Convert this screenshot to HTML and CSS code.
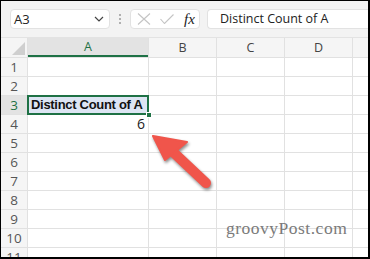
FILE: index.html
```html
<!DOCTYPE html>
<html lang="en">
<head>
  <meta charset="UTF-8">
  <meta name="viewport" content="width=device-width, initial-scale=1.0">
  <title>Distinct Count</title>
  <link rel="stylesheet" href="styles.css">
</head>
<body>
  <div class="frame">
    <div class="toolbar">
      <div class="namebox">
        <span>A3</span>
        <svg class="chevron" width="10" height="6" viewBox="0 0 10 6"><path d="M1 1l4 4 4-4" fill="none" stroke="#444" stroke-width="1.2"/></svg>
      </div>
      <div class="dots"><i></i><i></i><i></i></div>
      <div class="fxbox">
        <svg width="14" height="12" viewBox="0 0 14 12"><path d="M1 0.5l12 11M13 0.5l-12 11" stroke="#c4c4c4" stroke-width="1.1"/></svg>
        <svg width="14" height="10" viewBox="0 0 14 10"><path d="M0.5 5l4 4.5 9-9" fill="none" stroke="#c4c4c4" stroke-width="1.1"/></svg>
        <span class="fx">fx</span>
      </div>
      <div class="formula">Distinct Count of A</div>
    </div>

    <div class="sheet">
      <div class="corner"><span class="tri"></span></div>
      <div class="colhead active">A</div>
      <div class="colhead">B</div>
      <div class="colhead">C</div>
      <div class="colhead">D</div>
      <div class="colhead"></div>

      <div class="rowhead">1</div><div class="cell"></div><div class="cell"></div><div class="cell"></div><div class="cell"></div><div class="cell"></div>
      <div class="rowhead">2</div><div class="cell"></div><div class="cell"></div><div class="cell"></div><div class="cell"></div><div class="cell"></div>
      <div class="rowhead active">3</div><div class="cell selected">Distinct Count of A<span class="handle"></span></div><div class="cell"></div><div class="cell"></div><div class="cell"></div><div class="cell"></div>
      <div class="rowhead">4</div><div class="cell num">6</div><div class="cell"></div><div class="cell"></div><div class="cell"></div><div class="cell"></div>
      <div class="rowhead">5</div><div class="cell"></div><div class="cell"></div><div class="cell"></div><div class="cell"></div><div class="cell"></div>
      <div class="rowhead">6</div><div class="cell"></div><div class="cell"></div><div class="cell"></div><div class="cell"></div><div class="cell"></div>
      <div class="rowhead">7</div><div class="cell"></div><div class="cell"></div><div class="cell"></div><div class="cell"></div><div class="cell"></div>
      <div class="rowhead">8</div><div class="cell"></div><div class="cell"></div><div class="cell"></div><div class="cell"></div><div class="cell"></div>
      <div class="rowhead">9</div><div class="cell"></div><div class="cell"></div><div class="cell"></div><div class="cell"></div><div class="cell"></div>
      <div class="rowhead">10</div><div class="cell"></div><div class="cell"></div><div class="cell"></div><div class="cell"></div><div class="cell"></div>
      <div class="rowhead">11</div><div class="cell"></div><div class="cell"></div><div class="cell"></div><div class="cell"></div><div class="cell"></div>
    </div>

    <!-- annotation drawn over the sheet -->
    <svg class="arrow" width="370" height="259" viewBox="0 0 370 259">
      <g fill="#f0554b" stroke="#f0554b" stroke-linejoin="round">
        <path d="M206 183L172 151" stroke-width="10" stroke-linecap="round" fill="none"/>
        <path d="M153 136L187 142L165 160Z" stroke-width="2"/>
      </g>
    </svg>
    <div class="watermark">groovyPost.com</div>
  </div>
</body>
</html>
```

FILE: styles.css
```css
/* styles.css */
body {
  margin: 0;
  font-family: "Open Sans", "Noto Sans", sans-serif;
}

.frame {
  position: relative;
  width: 370px;
  height: 259px;
  box-sizing: border-box;
  border: 1px solid #000;
  border-right-width: 2px;
  border-bottom-width: 2px;
  background: #f3f3f3;
  overflow: hidden;
}

.toolbar {
  display: flex;
  align-items: center;
  height: 36px;
  padding-left: 9px;
  border-bottom: 1px solid #e3e3e3;
  box-sizing: border-box;
  height: 37px;
}

.namebox {
  display: flex;
  align-items: center;
  justify-content: space-between;
  width: 100px;
  height: 20px;
  box-sizing: border-box;
  padding: 0 5px 0 3px;
  background: #fff;
  border: 1px solid #e2e2e2;
  border-radius: 4px;
  font-size: 13px;
  color: #222;
}

.dots {
  display: flex;
  flex-direction: column;
  gap: 2px;
  margin: 0 9px 0 9px;
}

.dots i {
  width: 2px;
  height: 2px;
  background: #9a9a9a;
  border-radius: 1px;
}

.fxbox {
  display: flex;
  align-items: center;
  gap: 9px;
  width: 70px;
  height: 20px;
  box-sizing: border-box;
  padding-left: 6px;
  background: #fff;
  border: 1px solid #e2e2e2;
  border-radius: 4px;
}

.fx {
  font-family: "Liberation Serif", serif;
  font-style: italic;
  font-size: 15px;
  color: #222;
  margin-left: 1px;
}

.formula {
  flex: 1;
  height: 20px;
  box-sizing: border-box;
  margin-left: 7px;
  padding-left: 12px;
  background: #fff;
  border: 1px solid #e2e2e2;
  border-right: none;
  border-radius: 4px 0 0 4px;
  font-size: 12.5px;
  line-height: 18px;
  color: #222;
}

.sheet {
  display: grid;
  grid-template-columns: 26px 120px 67px 67px 67px 1fr;
  grid-template-rows: 19px;
  grid-auto-rows: 18px;
  gap: 1px;
  background: #e1e1e1;
  font-size: 13px;
}

.corner {
  position: relative;
  background: #f5f5f5;
}

.tri {
  position: absolute;
  right: 2px;
  bottom: 2px;
  width: 0;
  height: 0;
  border-left: 13px solid transparent;
  border-bottom: 13px solid #cfcfcf;
}

.colhead {
  background: #f5f5f5;
  color: #444;
  text-align: center;
  line-height: 19px;
  font-size: 12.5px;
}

.colhead.active {
  background: #e3e3e3;
  color: #1e7145;
  border-bottom: 2px solid #1e7145;
  line-height: 18px;
}

.rowhead {
  background: #f5f5f5;
  color: #555;
  text-align: center;
  line-height: 18px;
  font-size: 13.5px;
}

.rowhead.active {
  background: #e3e3e3;
  color: #1e7145;
}

.cell {
  background: #fff;
  line-height: 18px;
}

.cell.num {
  text-align: right;
  padding-right: 3px;
  font-size: 14px;
  color: #222;
}

.cell.selected {
  position: relative;
  background: #dde5f3;
  outline: 2px solid #1e7145;
  outline-offset: -1px;
  font-family: "Liberation Sans", Arial, sans-serif;
  font-weight: bold;
  font-size: 13px;
  letter-spacing: -0.3px;
  padding-left: 3px;
  color: #111;
}

.handle {
  position: absolute;
  right: -4px;
  bottom: -4px;
  width: 4px;
  height: 4px;
  background: #1e7145;
  border: 1px solid #fff;
}

.arrow {
  position: absolute;
  left: -1px;
  top: -1px;
  filter: drop-shadow(1px 2px 1.5px rgba(0, 0, 0, 0.45));
}

.watermark {
  position: absolute;
  left: 225px;
  top: 217px;
  font-family: "Liberation Serif", serif;
  font-size: 17.5px;
  letter-spacing: 0.5px;
  color: #7a7a7a;
}
```
